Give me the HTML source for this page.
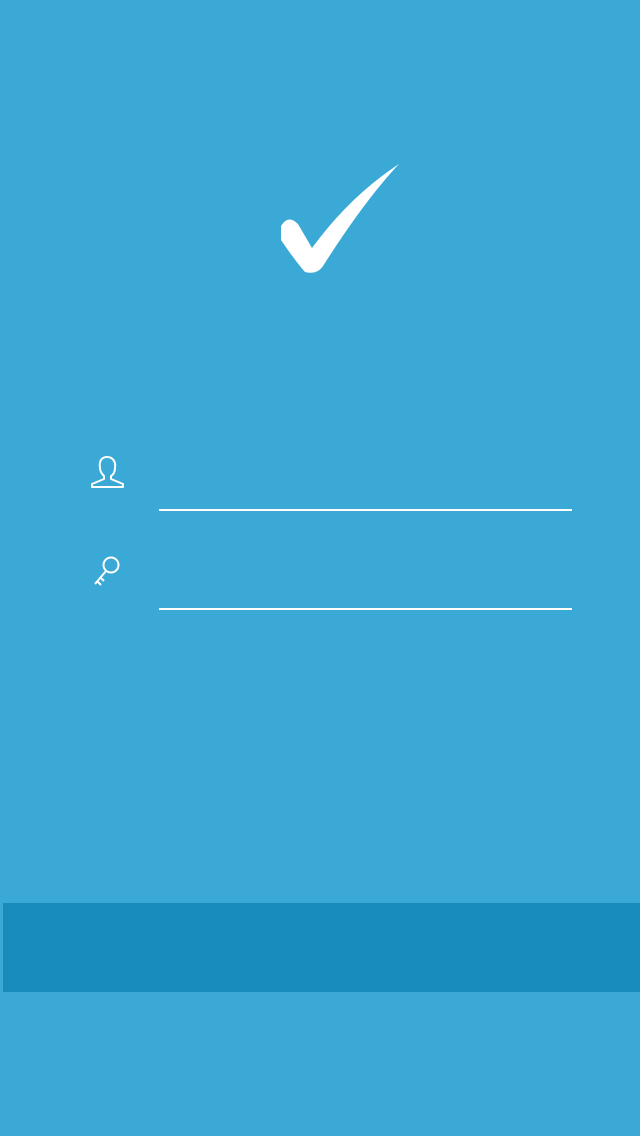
<!DOCTYPE html>
<html><head><style>
html,body{margin:0;padding:0}
body{width:640px;height:1136px;background:#3aa9d6;position:relative;overflow:hidden}
.line{position:absolute;left:159px;width:413px;height:2px;background:#fff}
.bar{position:absolute;left:3px;top:903px;width:637px;height:89px;background:#188cbc}
</style></head><body>
<svg width="640" height="1136" style="position:absolute;left:0;top:0">
<path d="M281,226 Q288,214 298,224 L312,248 Q350,196 399,164 Q365,200 323,266 Q317,275 305,272 Q296,262 281,240 Z" fill="#fff"/>
<path d="M107,457 c-6,0 -8,5 -7,11 c0,4 3,7 4,8 l0,3 l-12,5 l0,3 l31,0 l0,-3 l-12,-5 l0,-3 c2,-1 4,-4 4,-8 c1,-6 -2,-11 -8,-11 z" fill="none" stroke="#fff" stroke-width="2" stroke-linejoin="round"/>
<circle cx="111" cy="565" r="7.5" fill="none" stroke="#fff" stroke-width="2"/>
<path d="M106,571 L95,584 M97,581 L101,585 M100,577 L104,581" stroke="#fff" stroke-width="2" fill="none"/>
</svg>
<div class="line" style="top:509px"></div>
<div class="line" style="top:608px"></div>
<div class="bar"></div>
</body></html>
